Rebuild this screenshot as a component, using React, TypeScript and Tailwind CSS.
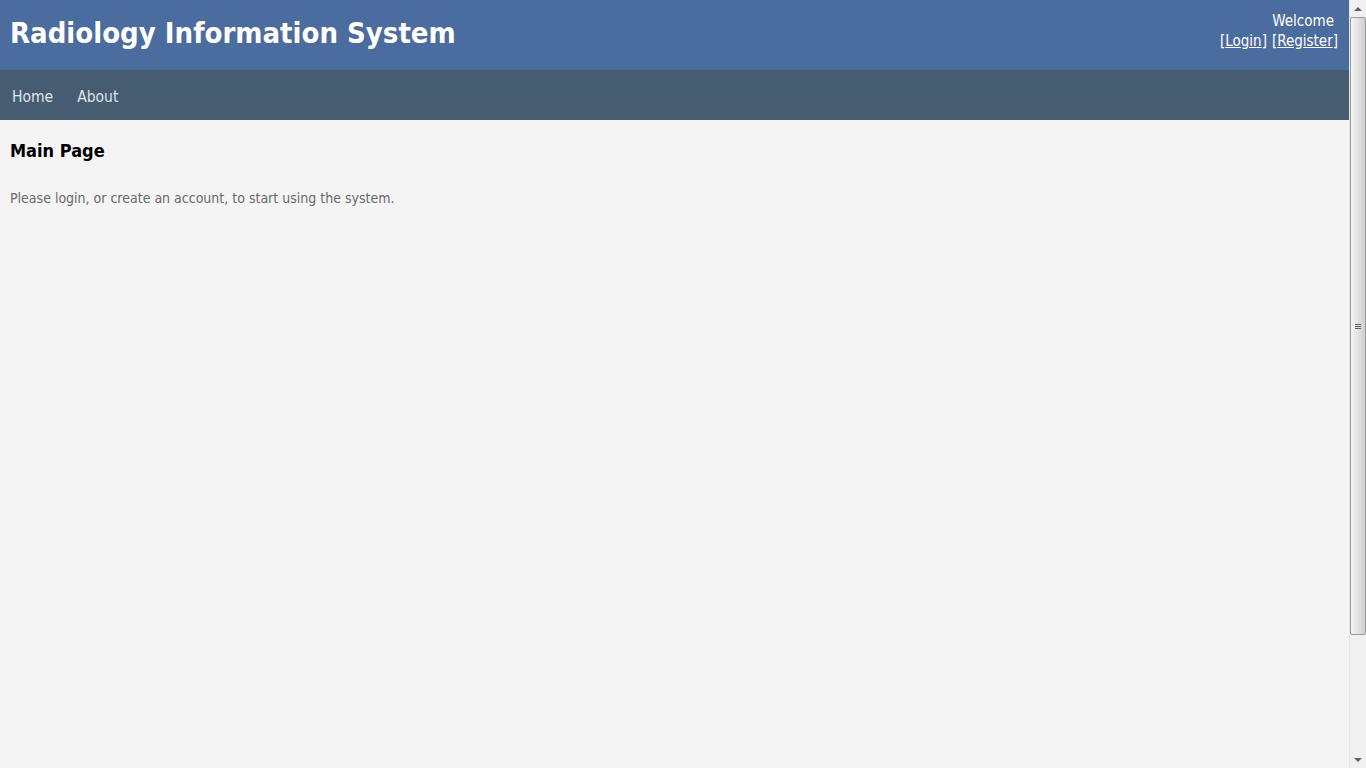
export default function App() {
  return (
    <div className="flex h-screen w-full overflow-hidden bg-[#f4f4f4] font-['DejaVu_Sans_Condensed','DejaVu_Sans',sans-serif]">
      <div className="flex min-w-0 flex-1 flex-col">
        {/* header */}
        <div className="flex h-[70px] items-start justify-between bg-[#4b6c9e] pl-[10px] pr-[11px]">
          <h1 className="mt-[14px] text-[29px] font-bold leading-[38px] text-white">
            Radiology Information System
          </h1>
          <div className="mt-[11px] flex flex-col items-end text-[15px] leading-[20px] text-white">
            <span className="pr-[4px]">Welcome</span>
            <div className="flex gap-[5px]">
              <span>
                [<a className="underline">Login</a>]
              </span>
              <span>
                [<a className="underline">Register</a>]
              </span>
            </div>
          </div>
        </div>

        {/* menu */}
        <nav className="flex h-[50px] items-center gap-[24px] bg-[#465c71] px-[12px] pt-[6px] text-[15.5px] text-[#dde4ec]">
          <a>Home</a>
          <a>About</a>
        </nav>

        {/* main */}
        <div className="flex-1 rounded-tl-[4px] bg-[#f4f4f4] px-[10px] pt-[18px]">
          <h2 className="text-[18px] font-bold leading-[26px] text-black">Main Page</h2>
          <p className="mt-[25px] text-[14px] leading-[18px] text-[#696969]">
            Please login, or create an account, to start using the system.
          </p>
        </div>
      </div>

      {/* scrollbar */}
      <div className="flex w-[17px] flex-col border-l border-[#e6e6e6] bg-[#f0f0f0]">
        <div className="flex h-[17px] items-center justify-center">
          <div className="h-0 w-0 border-x-[4px] border-b-[4px] border-x-transparent border-b-[#606060]" />
        </div>
        <div className="flex h-[618px] items-center justify-center rounded-[2px] border border-[#9a9a9a] bg-gradient-to-r from-[#f4f4f4] via-[#e2e2e2] to-[#cfcfcf]">
          <div className="flex flex-col gap-[1px]">
            <div className="h-[1px] w-[6px] bg-[#606060]" />
            <div className="h-[1px] w-[6px] bg-[#606060]" />
            <div className="h-[1px] w-[6px] bg-[#606060]" />
          </div>
        </div>
        <div className="flex-1" />
        <div className="flex h-[17px] items-center justify-center">
          <div className="h-0 w-0 border-x-[4px] border-t-[4px] border-x-transparent border-t-[#606060]" />
        </div>
      </div>
    </div>
  );
}
